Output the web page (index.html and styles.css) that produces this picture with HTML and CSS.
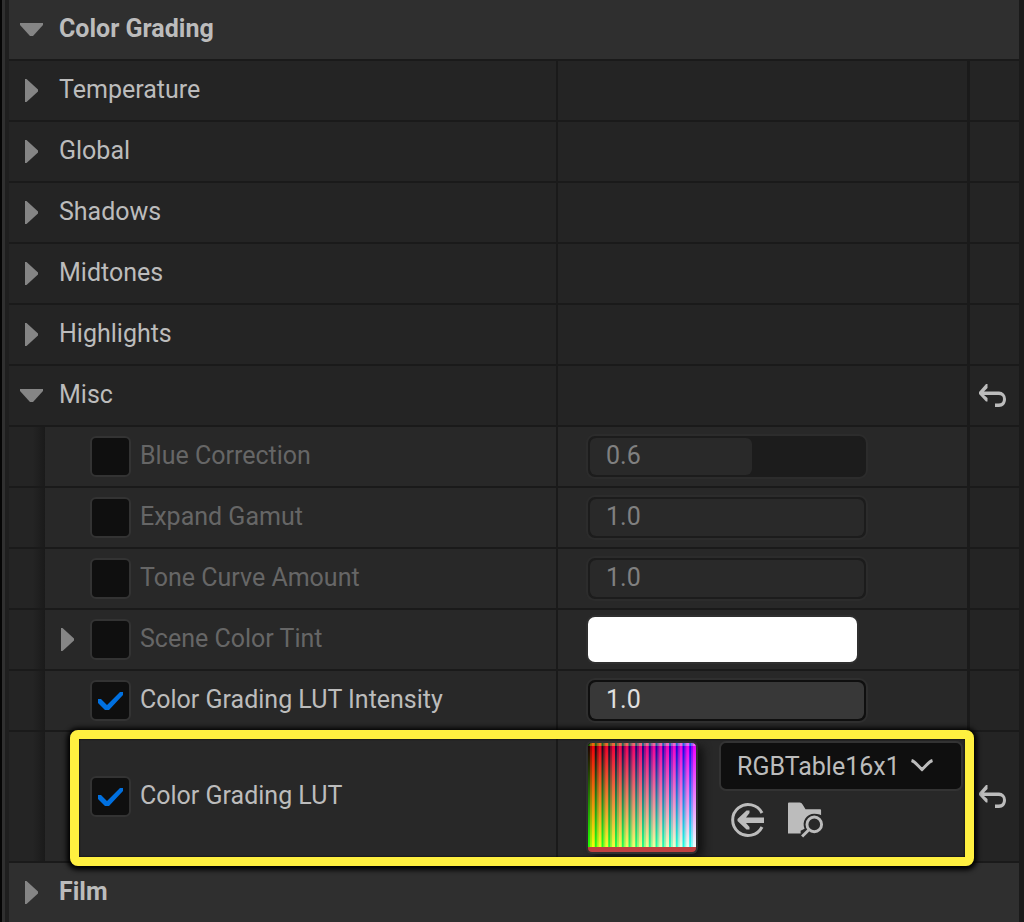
FILE: index.html
```html
<!DOCTYPE html>
<html lang="en">
<head>
<meta charset="utf-8">
<title>Color Grading</title>
<link rel="stylesheet" href="styles.css">
</head>
<body>
<svg class="defs" aria-hidden="true">
  <symbol id="closed" viewBox="0 0 23 23"><path d="M5 0h1.500L18 10.500v2L6.500 23H5z"/></symbol>
  <symbol id="open" viewBox="0 0 23 23"><path d="M0 5h23v2L13 18h-3L0 7z"/></symbol>
  <symbol id="revert" viewBox="0 0 27 23"><path d="M8.500 0v4L5 7.500h15a7 7.500 0 0 1 7 7.500c0 5-3 8-7 8h-4v-3.500h3.500c3 0 4.500-1.500 4.500-4.500s-1.500-4-4.500-4H5l3.500 3v3.500H7L0 10V8l7-8z"/></symbol>
</svg>
<main class="panel">
  <section>
    <h2 class="row heading"><button class="toggle" aria-expanded="true"><svg class="arrow"><use href="#open"/></svg><span class="text">Color Grading</span></button></h2>

    <div class="row"><div class="name"><button class="toggle" aria-expanded="false"><svg class="arrow"><use href="#closed"/></svg><span class="text">Temperature</span></button></div><div class="value"></div><div class="reset"></div></div>
    <div class="row"><div class="name"><button class="toggle" aria-expanded="false"><svg class="arrow"><use href="#closed"/></svg><span class="text">Global</span></button></div><div class="value"></div><div class="reset"></div></div>
    <div class="row"><div class="name"><button class="toggle" aria-expanded="false"><svg class="arrow"><use href="#closed"/></svg><span class="text">Shadows</span></button></div><div class="value"></div><div class="reset"></div></div>
    <div class="row"><div class="name"><button class="toggle" aria-expanded="false"><svg class="arrow"><use href="#closed"/></svg><span class="text">Midtones</span></button></div><div class="value"></div><div class="reset"></div></div>
    <div class="row"><div class="name"><button class="toggle" aria-expanded="false"><svg class="arrow"><use href="#closed"/></svg><span class="text">Highlights</span></button></div><div class="value"></div><div class="reset"></div></div>
    <div class="row"><div class="name"><button class="toggle" aria-expanded="true"><svg class="arrow"><use href="#open"/></svg><span class="text">Misc</span></button></div><div class="value"></div><div class="reset"><button class="icon-button" aria-label="Reset Misc"><svg class="revert"><use href="#revert"/></svg></button></div></div>

    <div class="row child off">
      <div class="name"><span class="arrow"></span><input class="check" type="checkbox" id="blue"><label class="text" for="blue">Blue Correction</label></div>
      <div class="value"><div class="spin"><span class="fill" style="width:59%"></span><input class="number" type="text" value="0.6" aria-label="Blue Correction value" disabled></div></div>
      <div class="reset"></div>
    </div>
    <div class="row child off">
      <div class="name"><span class="arrow"></span><input class="check" type="checkbox" id="gamut"><label class="text" for="gamut">Expand Gamut</label></div>
      <div class="value"><div class="spin"><span class="fill" style="width:100%"></span><input class="number" type="text" value="1.0" aria-label="Expand Gamut value" disabled></div></div>
      <div class="reset"></div>
    </div>
    <div class="row child off">
      <div class="name"><span class="arrow"></span><input class="check" type="checkbox" id="tone"><label class="text" for="tone">Tone Curve Amount</label></div>
      <div class="value"><div class="spin"><span class="fill" style="width:100%"></span><input class="number" type="text" value="1.0" aria-label="Tone Curve Amount value" disabled></div></div>
      <div class="reset"></div>
    </div>
    <div class="row child off">
      <div class="name"><button class="icon-button" aria-label="Expand Scene Color Tint"><svg class="arrow"><use href="#closed"/></svg></button><input class="check" type="checkbox" id="tint"><label class="text" for="tint">Scene Color Tint</label></div>
      <div class="value"><button class="swatch" aria-label="Tint color"></button></div>
      <div class="reset"></div>
    </div>
    <div class="row child">
      <div class="name"><span class="arrow"></span><input class="check" type="checkbox" id="intensity" checked><label class="text" for="intensity">Color Grading LUT Intensity</label></div>
      <div class="value"><div class="spin"><span class="fill" style="width:100%"></span><input class="number" type="text" value="1.0" aria-label="Color Grading LUT Intensity value"></div></div>
      <div class="reset"></div>
    </div>
    <div class="row child marked">
      <div class="name"><span class="arrow"></span><input class="check" type="checkbox" id="lut" checked><label class="text" for="lut">Color Grading LUT</label></div>
      <div class="value asset">
        <div class="thumb" role="img" aria-label="RGBTable16x1 texture"></div>
        <div class="asset-controls">
          <div class="picker">
            <select class="select" aria-label="Color Grading LUT texture"><option>RGBTable16x1</option></select>
            <svg class="chevron" viewBox="0 0 24 14"><path d="M1.500 1.500c3.500 1 6.500 5.500 10.500 9 4-3.500 7-8 10.500-9"/></svg>
          </div>
          <div class="actions">
            <button class="icon-button" aria-label="Use selected asset"><svg class="action" viewBox="0 0 36 36"><path class="line" d="M32 11A15.500 15.500 0 1 0 32 25"/><path d="M34 15.500V21H16l3.500 4v2.500h-3L7.500 19v-2l9-8.500h3V11L16 15.500z"/></svg></button>
            <button class="icon-button" aria-label="Browse to asset"><svg class="action" viewBox="0 0 37 36"><path d="M0 1q0-1 1-1h11q2 0 3 2l3 5h15q1 0 1 1v24H0z"/><path class="gap" d="M37 13v23H13v-7l4-2a11 11 0 0 1 10-15.500q6 0 10 3z"/><circle class="line" cx="27" cy="22.500" r="7.500"/><path class="line" d="M21.500 28 14.500 35"/></svg></button>
          </div>
        </div>
      </div>
      <div class="reset"><button class="icon-button" aria-label="Reset Color Grading LUT"><svg class="revert"><use href="#revert"/></svg></button></div>
    </div>
  </section>
  <section>
    <h2 class="row heading"><button class="toggle" aria-expanded="false"><svg class="arrow"><use href="#closed"/></svg><span class="text">Film</span></button></h2>
  </section>
</main>
</body>
</html>
```
FILE: styles.css
```css
* { box-sizing: border-box; }

body {
  margin: 0;
  background: #1a1a1a;
  color: #bcbcbc;
  font: 25px/30px Roboto, "Liberation Sans", sans-serif;
}

button, input, select { font: inherit; color: inherit; margin: 0; }
button { padding: 0; border: 0; background: none; text-align: left; }
svg { display: block; fill: currentColor; }
.defs { position: absolute; width: 0; height: 0; }

.panel {
  border-left: 2px solid #050505;
  padding: 0 5px 0 7px;
  background: linear-gradient(90deg, #303030 3px, #1f1f1f 3px, #1f1f1f 7px, #1a1a1a 7px);
}

.row {
  position: relative;
  display: grid;
  grid-template-columns: minmax(0, 547fr) minmax(0, 411fr) 52px;
  min-height: 61px;
  border-bottom: 2px solid #1a1a1a;
  background: #242424;
}

.heading {
  display: flex;
  margin: 0;
  background: #2f2f2f;
  font-size: inherit;
  font-weight: 700;
}

section:last-child .heading { min-height: 59px; border-bottom: 0; }

.toggle { display: flex; align-items: center; flex: 1; gap: 16px; padding-left: 11px; }
.arrow { width: 23px; height: 23px; flex: none; color: #858585; }
.text { padding-bottom: 2px; white-space: nowrap; }
.name { display: flex; align-items: center; }
.value { display: flex; align-items: center; border-left: 2px solid #1a1a1a; padding-left: 30px; }
.reset { display: flex; align-items: center; border-left: 3px solid #1a1a1a; padding-left: 9px; }
.revert { width: 27px; height: 23px; }

.child .name {
  padding-left: 47px;
  background: linear-gradient(90deg, #242424 24px, #1a1a1a 36px, #282828 36px);
}
.child .value { background: #282828; }
.off .text { color: #666; }

.check {
  appearance: none;
  flex: none;
  width: 41px;
  height: 41px;
  margin: 0 9px 0 11px;
  border: 2px solid #333;
  border-radius: 6px;
  background: #0f0f0f;
}
.check:checked::before {
  content: "";
  display: block;
  height: 100%;
  background: #0070e0;
  clip-path: polygon(6px 17px, 9px 17px, 15px 23px, 28px 10px, 31px 10px, 31px 13px, 17px 28px, 13px 28px, 6px 21px);
}

.spin {
  display: grid;
  width: 278px;
  height: 41px;
  border: 2px solid #0f0f0f;
  border-radius: 7px;
  background: #0f0f0f;
  box-shadow: 0 0 0 2px #2f2f2f;
}
.fill, .number { grid-area: 1 / 1; min-width: 0; }
.fill { border-radius: 6px; background: #383838; }
.number { width: 100%; padding: 0 0 2px 16px; border: 0; background: none; outline: 0; color: #e0e0e0; }
.off .number { color: #808080; }
.off .spin { border-color: #1c1c1c; background: #1c1c1c; box-shadow: 0 0 0 2px #2c2c2c; }
.off .fill { background: #292929; }

.swatch { width: 269px; height: 45px; border-radius: 7px; background: #fff; box-shadow: 0 0 0 2px #2f2f2f; }

.asset { align-items: flex-start; gap: 23px; padding-top: 9px; padding-bottom: 9px; }
.thumb {
  flex: none;
  width: 108px;
  height: 109px;
  margin-top: 2px;
  border-bottom: 5px solid #c04040;
  border-radius: 4px;
  background-image:
    linear-gradient(#060 3px, #000 3px, #0f0 100%),
    linear-gradient(90deg, #000, #00f),
    linear-gradient(90deg, #200 33%, #900 33%, #900 60%, #e00 60%);
  background-size: 100% 100%, 100% 100%, 6.25% 100%;
  background-blend-mode: screen;
  box-shadow: 0 0 0 2px #303030, 6px 4px 8px 1px #111;
}
.asset-controls { display: flex; flex-direction: column; gap: 11px; }
.picker { display: grid; align-items: center; }
.select {
  grid-area: 1 / 1;
  appearance: none;
  width: 244px;
  height: 50px;
  padding: 1px 50px 0 16px;
  border: 2px solid #333;
  border-radius: 7px;
  background: #0f0f0f;
}
.chevron {
  grid-area: 1 / 1;
  justify-self: end;
  width: 24px;
  height: 14px;
  margin-right: 29px;
  fill: none;
  stroke: currentColor;
  stroke-width: 3;
  pointer-events: none;
}
.actions { display: flex; gap: 22px; padding-left: 11px; }
.action { width: 36px; height: 36px; }
.line { fill: none; stroke: currentColor; stroke-width: 3; }
.gap { fill: #282828; }

.marked::after {
  content: "";
  position: absolute;
  inset: -2px 45px -5px 61px;
  border: 9px solid #fff040;
  border-radius: 8px;
  box-shadow: 0 1px 5px 3px #000, inset 0 0 2px #000;
  pointer-events: none;
  z-index: 1;
}
```
